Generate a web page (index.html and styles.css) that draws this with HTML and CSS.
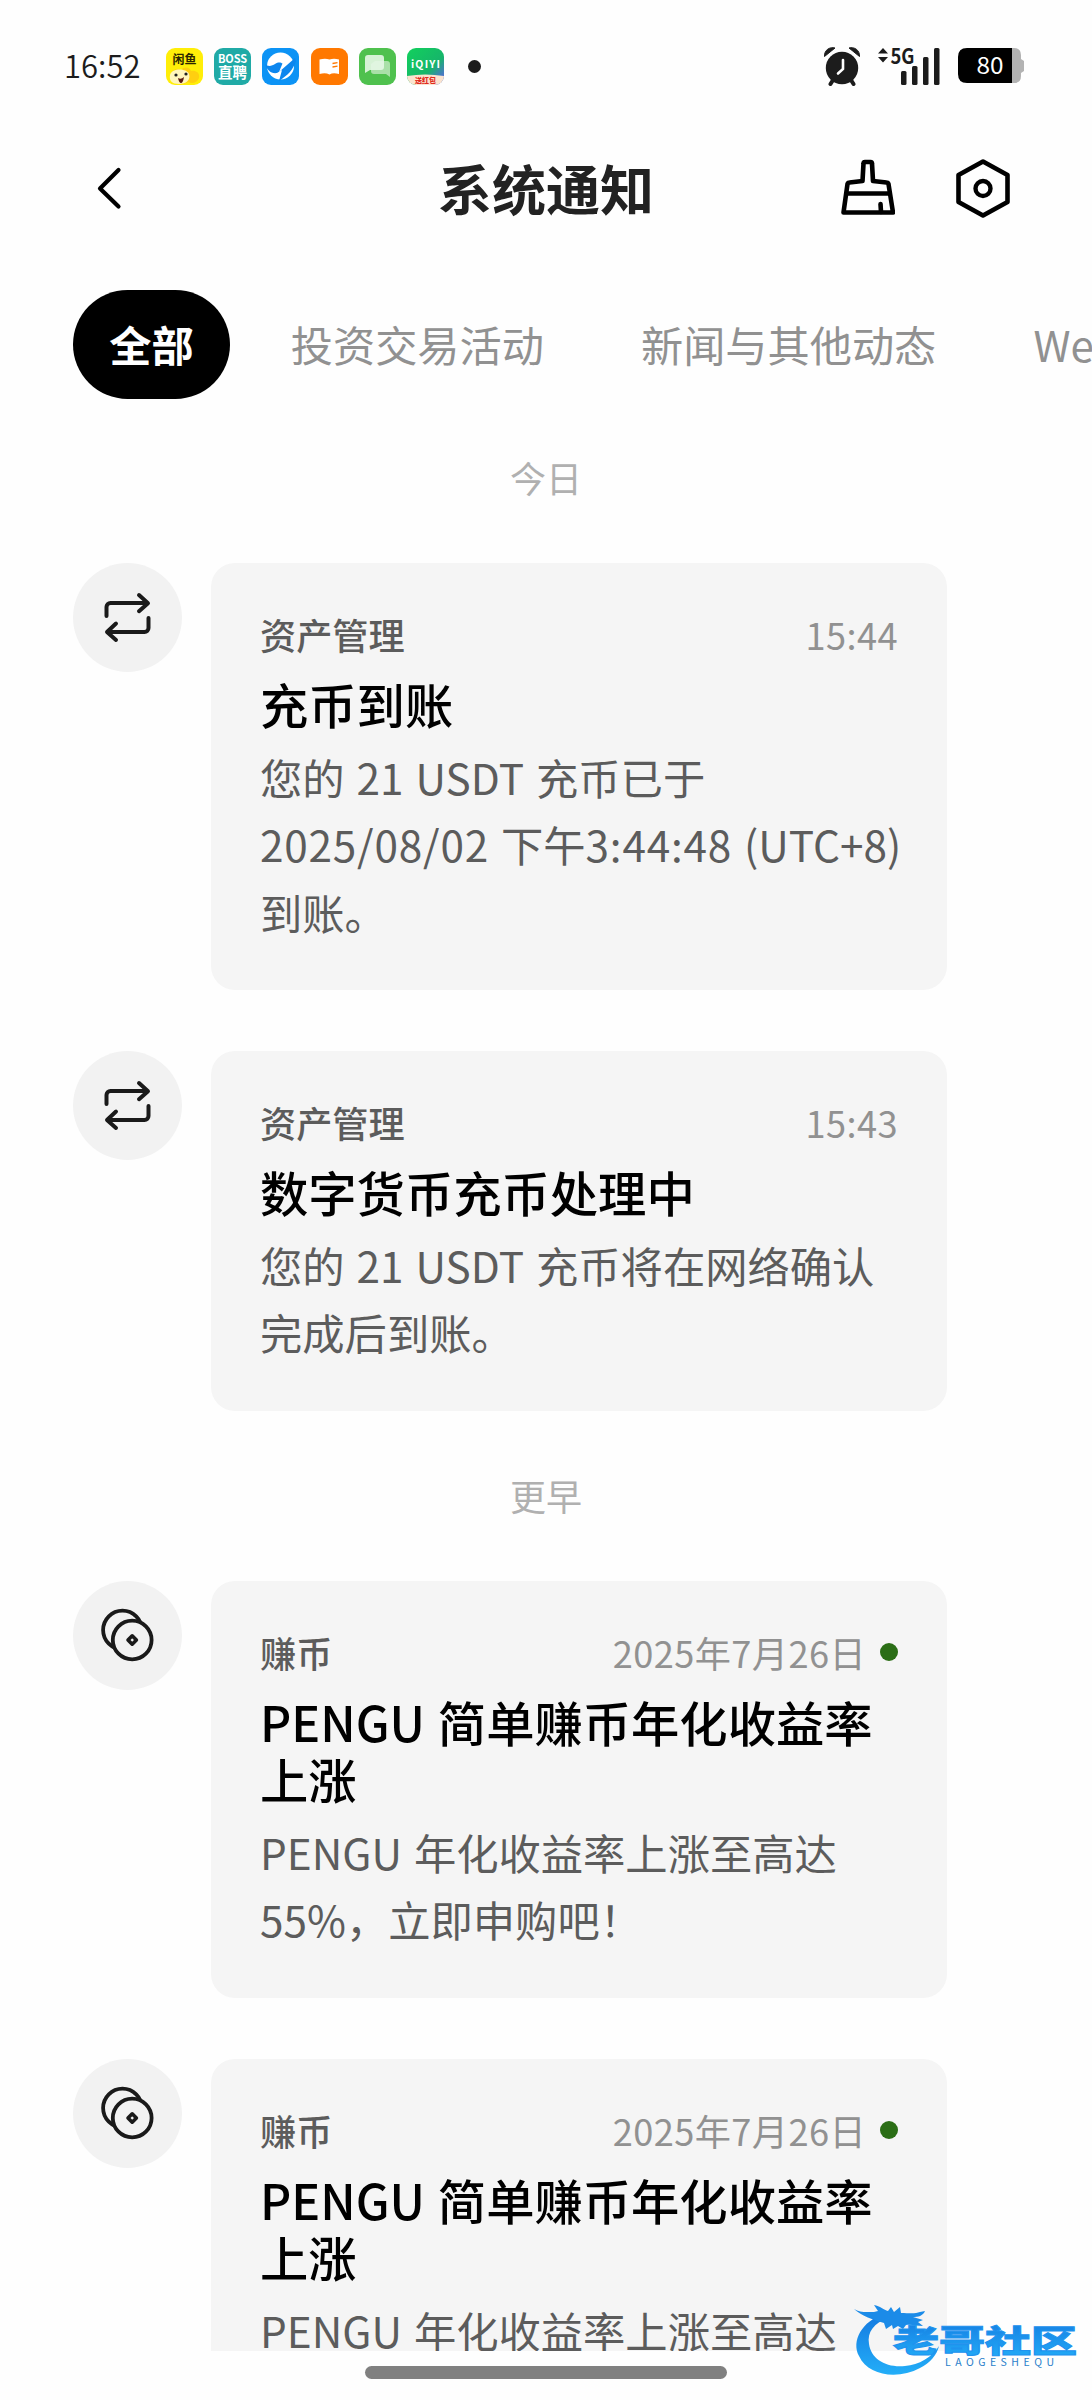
FILE: index.html
```html
<!DOCTYPE html>
<html lang="zh-CN">
<head>
<meta charset="utf-8">
<title>系统通知</title>
<link rel="stylesheet" href="styles.css">
</head>
<body>
<svg class="defs" width="0" height="0" aria-hidden="true">
  <symbol id="swap" viewBox="0 0 109 109">
    <g fill="none" stroke="#1a1a1a" stroke-width="4" stroke-linecap="round" stroke-linejoin="round">
      <path d="M33.500 53V44a4 4 0 0 1 4-4H74M66 32l9 8.200-9 8"/>
      <path d="M75.500 55v10a4 4 0 0 1-4 4H35M43 60.500l-9 8.500 9 8"/>
    </g>
  </symbol>
  <symbol id="coins" viewBox="0 0 109 109">
    <g fill="#f2f2f2" stroke="#1a1a1a" stroke-width="3.800">
      <circle cx="49.500" cy="49" r="19.400"/>
      <circle cx="59.200" cy="59" r="19.400"/>
      <path d="M59.200 54.800l4.200 4.200-4.200 4.200-4.200-4.200z" stroke-linejoin="round" stroke-width="3.600"/>
    </g>
  </symbol>
</svg>
<div class="screen">
  <div class="status">
    <span class="clock">16:52</span>
    <div class="apps">
      <svg width="37" height="37" viewBox="0 0 37 37">
        <rect width="37" height="37" rx="9" fill="#ffee08"/>
        <text x="18.500" y="16" font-size="12" font-weight="700" text-anchor="middle" fill="#2b2600">闲鱼</text>
        <path d="M5 30c-1-8 5-10 10-8 3-4 9-3 10 1 5-1 9 2 8 7-2 5-7 6-11 4-5 3-14 4-17-4z" fill="#ffcf10"/>
        <path d="M4 27c2-7 16-7 19-1 2 6-3 10-10 10S3 33 4 27z" fill="#fff6bd"/>
        <circle cx="10" cy="27" r="1.600" fill="#222"/><circle cx="20" cy="26" r="1.600" fill="#222"/>
        <path d="M12 30q3 2 6-1-1 6-3 6t-3-5z" fill="#5a1a10"/>
      </svg>
      <svg width="37" height="37" viewBox="0 0 37 37">
        <rect width="37" height="37" rx="9" fill="#20aaa6"/>
        <text x="18.500" y="14.500" font-size="11" font-weight="700" textLength="29" text-anchor="middle" fill="#fff">BOSS</text>
        <text x="18.500" y="30" font-size="14.500" font-weight="700" text-anchor="middle" fill="#fff">直聘</text>
      </svg>
      <svg width="37" height="37" viewBox="0 0 37 37">
        <rect width="37" height="37" rx="9" fill="#0c93f5"/>
        <circle cx="18.500" cy="18" r="13.500" fill="#fff"/>
        <path d="M3 16c3 3 7 2 10 0 4-2.500 6-1 7.500-.5L17 24l16-14 1 3C31 22 26 27 17 33l3-11-5 3C9 26 5 22 3 16z" fill="#0c86ee"/>
      </svg>
      <svg width="37" height="37" viewBox="0 0 37 37">
        <rect width="37" height="37" rx="9" fill="#ff7800"/>
        <path d="M8.500 11.500c4-1 7-1 10 0 3-1 6-1 9.500 0V26c-4-1-7-1-9.500.5-3-1.500-6-1.500-10-.5z" fill="#fff"/>
        <path d="M21.500 15.500l5-.8M21.500 19l5-.8" stroke="#ff7800" stroke-width="1.300"/>
      </svg>
      <svg width="37" height="37" viewBox="0 0 37 37">
        <rect width="37" height="37" rx="9" fill="#4fc14e"/>
        <path d="M16 13h12q3 0 3 3v13l-4-3H15q-3 0-3-3v-7z" fill="#a9e0a8"/>
        <path d="M9 7h13q3 0 3 3v9q0 3-3 3H11l-5 3V10q0-3 3-3z" fill="#e6f7e6" fill-opacity=".9"/>
      </svg>
      <svg width="37" height="37" viewBox="0 0 37 37">
        <defs><linearGradient id="iq" x1="0" y1="0" x2="1" y2="1"><stop offset="0" stop-color="#12d15c"/><stop offset=".6" stop-color="#16b56a"/><stop offset=".85" stop-color="#4b76c8"/></linearGradient></defs>
        <rect width="37" height="37" rx="9" fill="url(#iq)"/>
        <path d="M0 28q18-3 37 0a9 9 0 0 1-9 9H9a9 9 0 0 1-9-9z" fill="#fbe3cf"/>
        <text x="18.500" y="20" font-size="10.500" font-weight="700" textLength="29" text-anchor="middle" fill="#fff">iQIYI</text>
        <text x="18.500" y="35" font-size="7" font-weight="900" text-anchor="middle" fill="#e02a1c">送红包</text>
      </svg>
    </div>
    <span class="more"></span>
    <svg class="alarm" width="40" height="40" viewBox="0 0 40 40">
      <circle cx="19" cy="22" r="16.200" fill="#1c1c1c"/>
      <path d="M1.500 10.500C1 4 7 .5 12 2zM36.500 10.500C37 4 31 .5 26 2z" fill="#1c1c1c" stroke="#1c1c1c" stroke-linejoin="round"/>
      <path d="M10 34l-2.500 4M28 34l2.500 4" stroke="#1c1c1c" stroke-width="4" stroke-linecap="round"/>
      <path d="M20 14v9l-5 4.500" fill="none" stroke="#fff" stroke-width="2.600" stroke-linecap="round"/>
    </svg>
    <svg class="signal" width="64" height="40" viewBox="0 0 64 40">
      <g fill="#1c1c1c">
        <path d="M1 7.500L6 2l5 5.500zM1 11h10l-5 5.500z"/>
        <rect x="24" y="25" width="5.500" height="14" rx="1.500"/><rect x="35" y="20" width="5.500" height="19" rx="1.500"/><rect x="46" y="11" width="5.500" height="28" rx="1.500"/><rect x="57" y="2" width="5.500" height="37" rx="1.500"/>
        <text x="13.500" y="17.500" font-size="21" font-weight="700" textLength="24" lengthAdjust="spacingAndGlyphs">5G</text>
      </g>
    </svg>
    <svg class="battery" width="68" height="36" viewBox="0 0 68 36">
      <path d="M54 0h2q7 0 7 7v4l3 2v10l-3 2v3q0 7-7 7h-2z" fill="#b3b3b3"/>
      <path d="M9 0h45v35H9q-9 0-9-9V9q0-9 9-9z"/>
      <text x="32" y="25.500" font-size="23" textLength="27" lengthAdjust="spacingAndGlyphs" text-anchor="middle" fill="#fff">80</text>
    </svg>
  </div>

  <header class="header">
    <svg class="back" width="54" height="64" viewBox="0 0 54 64"><path d="M45.500 14L27 32.500 45.500 50.500" fill="none" stroke="#000" stroke-width="4.200" stroke-linecap="round" stroke-linejoin="round"/></svg>
    <h1>系统通知</h1>
    <div class="actions">
      <svg width="54" height="60" viewBox="0 0 54 60">
        <g fill="none" stroke="#000" stroke-width="4.600" stroke-linecap="round" stroke-linejoin="round">
          <path d="M22.500 5.500q0-1.500 1.500-1.500h5.500q1.500 0 1.500 1.500L32 23l13.500 1.500q1.500 0 2 1.500L52 54.500H2.500L6.500 26Q7 24.500 8.500 24.500L21.500 23z"/>
          <path d="M6.500 35.500h42M39.500 46l.5 8"/>
        </g>
      </svg>
      <svg width="54" height="60" viewBox="0 0 54 60">
        <path d="M27 3.500L51.500 17v27L27 57.500 2.500 44V17z" fill="none" stroke="#000" stroke-width="4.600" stroke-linejoin="round"/>
        <circle cx="27" cy="30.500" r="7.500" fill="none" stroke="#000" stroke-width="4.400"/>
      </svg>
    </div>
  </header>

  <nav class="tabs">
    <span class="tab active">全部</span>
    <span class="tab">投资交易活动</span>
    <span class="tab">新闻与其他动态</span>
    <span class="tab">Web3</span>
  </nav>

  <main class="feed">
    <div class="day">今日</div>
    <article class="item">
      <svg class="avatar"><use href="#swap"/></svg>
      <div class="card">
        <div class="meta"><span>资产管理</span><time>15:44</time></div>
        <h2>充币到账</h2>
        <p>您的 21 USDT 充币已于<br><span class="digits">2025/08/02</span> 下午<span class="digits">3:44:48</span> (UTC+8)<br>到账。</p>
      </div>
    </article>
    <article class="item">
      <svg class="avatar"><use href="#swap"/></svg>
      <div class="card">
        <div class="meta"><span>资产管理</span><time>15:43</time></div>
        <h2>数字货币充币处理中</h2>
        <p>您的 21 USDT 充币将在网络确认<br>完成后到账。</p>
      </div>
    </article>
    <div class="day earlier">更早</div>
    <article class="item">
      <svg class="avatar"><use href="#coins"/></svg>
      <div class="card">
        <div class="meta"><span>赚币</span><time>2025年7月26日</time><i class="unread"></i></div>
        <h2>PENGU 简单赚币年化收益率<br>上涨</h2>
        <p>PENGU 年化收益率上涨至高达<br>55%，立即申购吧！</p>
      </div>
    </article>
    <article class="item">
      <svg class="avatar"><use href="#coins"/></svg>
      <div class="card">
        <div class="meta"><span>赚币</span><time>2025年7月26日</time><i class="unread"></i></div>
        <h2>PENGU 简单赚币年化收益率<br>上涨</h2>
        <p>PENGU 年化收益率上涨至高达<br>55%，立即申购吧！</p>
      </div>
    </article>
  </main>

  <div class="homebar"></div>

  <svg class="watermark" width="224" height="74" viewBox="0 0 224 74">
    <defs><linearGradient id="wm" x1="0" y1="0" x2="0" y2="1"><stop offset="0" stop-color="#1479e0"/><stop offset="1" stop-color="#23aef8"/></linearGradient></defs>
    <path d="M30 9C8 16-3 36 5 51c9 20 39 24 61 12 10-5 17-13 19-22-7 11-20 19-34 20-19 2-34-7-36-22C13 27 20 18 34 13z" fill="url(#wm)"/>
    <path d="M0 4c6 4 13 3 20 3l4-1-4-6c6 1 10 5 14 6l3-4 3 5 6-5 1 6c8 0 14 1 19-1l5-1c-2 5-7 6-12 6l10 3-5 2 5 4c-6 0-12-2-17-1l-3 4-5-3-5 3-1-4-6 4-2-6C19 15 8 11 0 4z" fill="#1b8be8"/>
    <text x="39" y="47" font-size="31" font-weight="900" textLength="184" lengthAdjust="spacingAndGlyphs" fill="url(#wm)" stroke="#1f93ee" stroke-width="1">老哥社区</text>
    <text x="91" y="61" font-size="10.500" textLength="109" fill="#2a7fca">LAOGESHEQU</text>
  </svg>
</div>
</body>
</html>
```
FILE: styles.css
```css
* { box-sizing: border-box; }

body {
  margin: 0;
  background: #fff;
  font-family: "Noto Sans CJK SC", "Noto Sans", sans-serif;
  color: #000;
}

.defs { position: absolute; }

.screen {
  position: relative;
  display: flex;
  flex-direction: column;
  width: 1092px;
  height: 2400px;
  overflow: hidden;
  background: #fefefe;
}

.status {
  display: flex;
  align-items: center;
  height: 84px;
  margin-top: 24px;
  padding-left: 64px;
  flex: none;
}
.clock { width: 101.500px; font-size: 31px; line-height: 40px; padding-bottom: 2px; font-weight: 350; color: #1c1c1c; }
.apps { display: flex; gap: 11.400px; width: 280px; }
.more { width: 13px; height: 13px; margin-left: 22px; border-radius: 50%; background: #1c1c1c; }
.alarm { margin-left: 342px; }
.signal { margin-left: 14px; }
.battery { margin-left: 17px; }

.header {
  display: grid;
  grid-template-columns: 1fr auto 1fr;
  align-items: center;
  height: 160px;
  padding: 0 82px;
  flex: none;
}
.header h1 { margin: 0; font-size: 54px; line-height: 64px; font-weight: 700; color: #222; }
.back { margin-left: -9px; }
.actions { display: flex; justify-content: flex-end; gap: 61px; }

.tabs { display: flex; gap: 24.500px; height: 109px; margin: 22px 0 0 73px; flex: none; }
.tab {
  flex: none;
  padding: 0 36.300px;
  font-size: 42.200px;
  line-height: 108px;
  color: #919191;
  white-space: nowrap;
}
.tab.active { border-radius: 55px; background: #000; color: #fff; font-weight: 700; }

.feed { height: 1952px; overflow: hidden; flex: none; }
.day { height: 106px; margin-top: 58px; font-size: 36px; line-height: 40px; text-align: center; color: #b0b0b0; }
.day.earlier { margin-top: 64px; }

.item { display: flex; align-items: flex-start; gap: 29.500px; padding-left: 72.500px; }
.item + .item { margin-top: 61px; }
.avatar { width: 109px; height: 109px; border-radius: 50%; background: #f2f2f2; flex: none; }
.card { width: 736px; padding: 44px 49px 45px; border-radius: 24px; background: #f5f5f5; }

.meta { display: flex; align-items: center; height: 54px; font-size: 36.200px; color: #5c5c5c; }
.meta span { font-weight: 500; }
.meta time { margin-left: auto; color: #919191; letter-spacing: .4px; }
.unread { width: 18px; height: 18px; margin-left: 14px; border-radius: 50%; background: #2b6e16; }

.card h2 { margin: 14px 0 10px; font-size: 48.300px; line-height: 57.600px; font-weight: 500; word-spacing: 2px; white-space: nowrap; }
.card p { margin: 0; font-size: 42.300px; line-height: 67.500px; color: #5c5c5c; word-spacing: 2.500px; white-space: nowrap; }
.digits { letter-spacing: .8px; }

.homebar { width: 362px; height: 13px; margin: 15px auto 0; border-radius: 7px; background: #808080; flex: none; }

.watermark { position: absolute; left: 854px; top: 2305px; overflow: visible; }
```
